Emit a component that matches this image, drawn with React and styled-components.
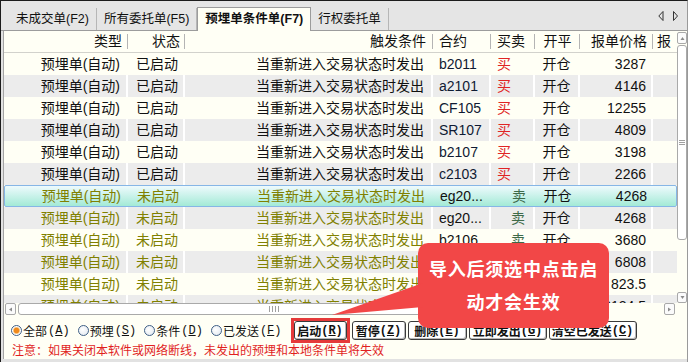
import React from "react";
import styled, { createGlobalStyle } from "styled-components";

const GlobalStyle = createGlobalStyle`
  html, body {
    margin: 0;
    padding: 0;
    background: #ffffff;
  }
  body {
    font-family: "Liberation Sans", "Noto Sans CJK SC", sans-serif;
    color: #111;
  }
`;

const COLS = "124px 57px 248px 58px 44px 45px 73px 60px";
const CJK = `"Noto Sans CJK SC", sans-serif`;
const MONO = `"Liberation Mono", "Noto Sans CJK SC", monospace`;

const Frame = styled.div`
  position: relative;
  width: 688px;
  height: 362px;
  box-sizing: border-box;
  border-top: 1px solid #1c1c1c;
  border-left: 1px solid #1c1c1c;
  border-right: 1px solid #9a9a9a;
  background: #e2e2e2;
  display: flex;
  flex-direction: column;
  overflow: hidden;
`;

const TabBar = styled.div`
  flex: none;
  display: flex;
  align-items: flex-end;
  height: 30px;
  box-sizing: border-box;
  padding: 0 9px 0 8px;
  border-bottom: 1px solid #9c9c9c;
  background: #e5e5e5;
`;

const Tab = styled.div`
  height: ${(p) => (p.$active ? 24 : 22)}px;
  line-height: ${(p) => (p.$active ? 23 : 22)}px;
  margin-bottom: ${(p) => (p.$active ? -1 : 0)}px;
  padding: 0 7px;
  box-sizing: border-box;
  font-size: 12.5px;
  font-weight: ${(p) => (p.$active ? 700 : 400)};
  white-space: nowrap;
  background: ${(p) => (p.$active ? "#fffff5" : "transparent")};
  border-left: ${(p) => (p.$active ? "1px solid #9c9c9c" : "none")};
  border-top: ${(p) => (p.$active ? "1px solid #9c9c9c" : "none")};
  border-right: 1px solid ${(p) => (p.$active ? "#9c9c9c" : "#b6b6b6")};
`;

const TabArrows = styled.svg`
  margin-left: auto;
  align-self: center;
  flex: none;
`;

const Body = styled.div`
  flex: none;
  height: 328px;
  margin-left: 2px;
  border-left: 1px solid #a4a4a4;
  background: #fffff5;
  display: flex;
  flex-direction: column;
`;

const GridArea = styled.div`
  display: flex;
  height: 272px;
`;

const Table = styled.div`
  width: 673px;
  overflow: hidden;
  display: flex;
  flex-direction: column;
`;

const HeaderRow = styled.div`
  flex: none;
  display: grid;
  grid-template-columns: ${COLS};
  height: 22px;
  box-sizing: border-box;
  border-bottom: 1px solid #d2d2cc;
`;

const HeadCell = styled.div`
  padding: ${(p) => p.$pad || "0 6px"};
  font-size: 14px;
  line-height: 21px;
  white-space: nowrap;
  overflow: hidden;
  text-align: ${(p) => p.$align};
  background: ${(p) =>
    p.$sep ? "linear-gradient(#b4b4b4, #b4b4b4) right 3px / 1px 15px no-repeat" : "none"};
`;

const Row = styled.div`
  flex: none;
  display: grid;
  grid-template-columns: ${COLS};
  height: 22px;
  box-sizing: border-box;
  background: ${(p) => (p.$odd ? "#ececec" : "#fffff5")};
  color: ${(p) => (p.$started ? "#111" : "#808000")};
  line-height: 22px;

  &[data-selected="true"] {
    background: linear-gradient(#eefafd, #a3ead6);
    border: 1px solid #86b6e6;
    border-radius: 2px;
    line-height: 20px;
  }
`;

const Cell = styled.div`
  padding: ${(p) => p.$pad || "0 6px"};
  font-size: 14px;
  white-space: nowrap;
  overflow: hidden;
  text-align: ${(p) => p.$align || "left"};
  color: ${(p) => p.$color || "inherit"};
  border-right: 2px solid ${(p) => (p.$sep ? "#ffffff" : "transparent")};
`;

const VScroll = styled.div`
  width: 10px;
  display: flex;
  flex-direction: column;
  gap: 1px;
  padding-top: 1px;
  box-sizing: border-box;
`;

const ScrollButton = styled.div`
  flex: none;
  width: ${(p) => p.$w || "auto"};
  height: ${(p) => p.$h || "auto"};
  box-sizing: border-box;
  border: 1px solid #a9a9a9;
  border-radius: 2px;
  background: #fbfbfb;
  display: flex;
  align-items: center;
  justify-content: center;
`;

const Thumb = styled.div`
  flex: none;
  box-sizing: border-box;
  width: ${(p) => p.$w};
  height: ${(p) => p.$h};
  border: 1px solid #a9a9a9;
  border-radius: 3px;
  background: #ffffff;
  display: flex;
  align-items: center;
  justify-content: center;
`;

const Spacer = styled.div`
  flex: 1;
`;

const HScrollRow = styled.div`
  flex: none;
  display: flex;
  height: 12px;
`;

const HScroll = styled.div`
  width: 673px;
  display: flex;
  gap: 2px;
  padding: 0 2px 0 1px;
  box-sizing: border-box;
`;

const Controls = styled.div`
  flex: 1;
  display: flex;
  flex-direction: column;
  padding: 3px 0 0 7px;
`;

const ControlRow = styled.div`
  display: flex;
  align-items: center;
  height: 25px;
`;

const RadioGroup = styled.div`
  display: flex;
  gap: 8px;
`;

const Radio = styled.label`
  display: flex;
  align-items: center;
  gap: 1px;
  font-size: 12px;
  font-family: ${CJK};
  line-height: 14px;
  white-space: nowrap;
`;

const Dot = styled.span`
  width: 11px;
  height: 11px;
  box-sizing: border-box;
  border-radius: 50%;
  border: 1px solid #3f5f86;
  background: ${(p) =>
    p.$on
      ? "radial-gradient(circle, #f08a1c 0 2.5px, #f6c07a 3px, #fff 4px)"
      : "radial-gradient(circle at 40% 40%, #ffffff, #dfe6ee)"};
`;

const Mono = styled.span`
  font-family: ${MONO};
  font-size: 12px;
`;

const ButtonGroup = styled.div`
  display: flex;
  align-items: center;
  gap: 2px;
  margin-left: 9px;
`;

const Highlight = styled.div`
  display: flex;
  border: 3px solid #e53a3a;
`;

const ActionButton = styled.button`
  width: ${(p) => p.$w}px;
  height: 19px;
  padding: 0;
  box-sizing: border-box;
  border: 1px solid #3a3a3a;
  border-radius: 3px;
  background: #ffffff;
  box-shadow: inset -1px -1px 0 #b8b8b8;
  font-family: ${CJK};
  font-size: 12px;
  font-weight: 700;
  color: #111;
  display: flex;
  align-items: center;
  justify-content: center;
  white-space: nowrap;

  ${Mono} {
    font-weight: 700;
  }
`;

const Notice = styled.div`
  padding-left: 1px;
  font-family: ${CJK};
  font-size: 12px;
  line-height: 14px;
  color: #e11f1f;
  white-space: nowrap;
`;

const Callout = styled.div`
  position: absolute;
  left: 417px;
  top: 242px;
  width: 191px;
  height: 85px;
  box-sizing: border-box;
  padding: 9px 6px;
  border-radius: 10px;
  background: #f24747;
  color: #ffffff;
  font-family: ${CJK};
  font-size: 18px;
  font-weight: 700;
  line-height: 33px;
  letter-spacing: 0.8px;
  text-align: center;
`;

const CalloutTail = styled.svg`
  position: absolute;
  left: -88px;
  top: 38px;
`;

const rows = [
  { started: true, code: "b2011", side: "买", price: "3287" },
  { started: true, code: "a2101", side: "买", price: "4146" },
  { started: true, code: "CF105", side: "买", price: "12255" },
  { started: true, code: "SR107", side: "买", price: "4809" },
  { started: true, code: "b2107", side: "买", price: "3198" },
  { started: true, code: "c2103", side: "买", price: "2266" },
  { started: false, code: "eg20...", side: "卖", price: "4268", selected: true },
  { started: false, code: "eg20...", side: "卖", price: "4268" },
  { started: false, code: "b2106", side: "卖", price: "3680" },
  { started: false, code: "RM105", side: "卖", price: "6808" },
  { started: false, code: "i2105", side: "卖", price: "823.5" },
  { started: false, code: "j2105", side: "卖", price: "2124.5" },
];

const Tri = ({ dir }) => (
  <svg width="5" height="5" viewBox="0 0 5 5">
    <polygon
      points={dir === "up" ? "2.5,1 0.5,4 4.5,4" : dir === "down" ? "0.5,1 4.5,1 2.5,4" : dir === "left" ? "4,0.5 4,4.5 1,2.5" : "1,0.5 1,4.5 4,2.5"}
      fill="#8a8a8a"
    />
  </svg>
);

const Label = ({ text, hot }) => (
  <>
    {text}
    <Mono>
      (<u>{hot}</u>)
    </Mono>
  </>
);

export default function App() {
  return (
    <>
      <GlobalStyle />
      <Frame>
        <TabBar>
          <Tab>未成交单(F2)</Tab>
          <Tab>所有委托单(F5)</Tab>
          <Tab $active>预埋单条件单(F7)</Tab>
          <Tab>行权委托单</Tab>
          <TabArrows width="20" height="10" viewBox="0 0 20 10">
            <polygon points="5,0.5 0.8,5 5,9.5" fill="none" stroke="#333" strokeWidth="1" />
            <polygon points="15.5,0.5 19.5,5 15.5,9.5" fill="none" stroke="#333" strokeWidth="1" />
          </TabArrows>
        </TabBar>

        <Body>
          <GridArea>
            <Table>
              <HeaderRow>
                <HeadCell $align="right" $sep>类型</HeadCell>
                <HeadCell $align="right" $pad="0 5px" $sep>状态</HeadCell>
                <HeadCell $align="right" $pad="0 7px" $sep>触发条件</HeadCell>
                <HeadCell $align="left" $sep>合约</HeadCell>
                <HeadCell $align="left" $sep>买卖</HeadCell>
                <HeadCell $align="center" $sep>开平</HeadCell>
                <HeadCell $align="right" $sep>报单价格</HeadCell>
                <HeadCell $align="left" $pad="0 4px">报</HeadCell>
              </HeaderRow>
              {rows.map((r, i) => {
                const sep = i % 2 === 1 && !r.selected;
                return (
                  <Row key={i} $odd={i % 2 === 1} $started={r.started} data-selected={r.selected ? "true" : "false"}>
                    <Cell $align="right" $sep={sep}>预埋单(自动)</Cell>
                    <Cell $align="right" $pad="0 5px" $sep={sep}>{r.started ? "已启动" : "未启动"}</Cell>
                    <Cell $align="right" $pad="0 7px" $sep={sep}>当重新进入交易状态时发出</Cell>
                    <Cell $color={r.started ? "#0f1a33" : "#111"} $sep={sep}>{r.code}</Cell>
                    <Cell
                      $align={r.side === "买" ? "left" : "right"}
                      $pad={r.side === "买" ? "0 6px" : "0 8px"}
                      $color={r.side === "买" ? "#e02424" : "#3e6a48"}
                      $sep={sep}
                    >
                      {r.side}
                    </Cell>
                    <Cell $align="center" $color="#111" $sep={sep}>开仓</Cell>
                    <Cell $align="right" $pad="0 5px" $color="#111" $sep={sep}>{r.price}</Cell>
                    <Cell />
                  </Row>
                );
              })}
            </Table>
            <VScroll>
              <ScrollButton $h="12px"><Tri dir="up" /></ScrollButton>
              <Thumb $w="100%" $h="195px">
                <svg width="6" height="5" viewBox="0 0 6 5">
                  <path d="M0 0.5H6M0 2.5H6M0 4.5H6" stroke="#a0a0a0" strokeWidth="1" />
                </svg>
              </Thumb>
              <Spacer />
              <ScrollButton $h="11px"><Tri dir="down" /></ScrollButton>
            </VScroll>
          </GridArea>

          <HScrollRow>
            <HScroll>
              <ScrollButton $w="11px"><Tri dir="left" /></ScrollButton>
              <Thumb $w="513px" $h="100%">
                <svg width="12" height="6" viewBox="0 0 12 6">
                  <path d="M0.5 0V6M3.5 0V6M6.5 0V6M9.5 0V6" stroke="#a0a0a0" strokeWidth="1" />
                </svg>
              </Thumb>
              <Spacer />
              <ScrollButton $w="11px"><Tri dir="right" /></ScrollButton>
            </HScroll>
          </HScrollRow>

          <Controls>
            <ControlRow>
              <RadioGroup>
                <Radio><Dot $on /><Label text="全部" hot="A" /></Radio>
                <Radio><Dot /><Label text="预埋" hot="S" /></Radio>
                <Radio><Dot /><Label text="条件" hot="D" /></Radio>
                <Radio><Dot /><Label text="已发送" hot="F" /></Radio>
              </RadioGroup>
              <ButtonGroup>
                <Highlight>
                  <ActionButton $w={53}><Label text="启动" hot="R" /></ActionButton>
                </Highlight>
                <ActionButton $w={54}><Label text="暂停" hot="Z" /></ActionButton>
                <ActionButton $w={59}><Label text="删除" hot="E" /></ActionButton>
                <ActionButton $w={78}><Label text="立即发出" hot="G" /></ActionButton>
                <ActionButton $w={88}><Label text="清空已发送" hot="C" /></ActionButton>
              </ButtonGroup>
            </ControlRow>
            <Notice>注意：如果关闭本软件或网络断线，未发出的预埋和本地条件单将失效</Notice>
          </Controls>
        </Body>

        <Callout>
          <CalloutTail width="94" height="36" viewBox="0 0 94 36">
            <polygon points="93,2 93,26 2,34" fill="#f24747" />
          </CalloutTail>
          导入后须选中点击启
          <br />
          动才会生效
        </Callout>
      </Frame>
    </>
  );
}
